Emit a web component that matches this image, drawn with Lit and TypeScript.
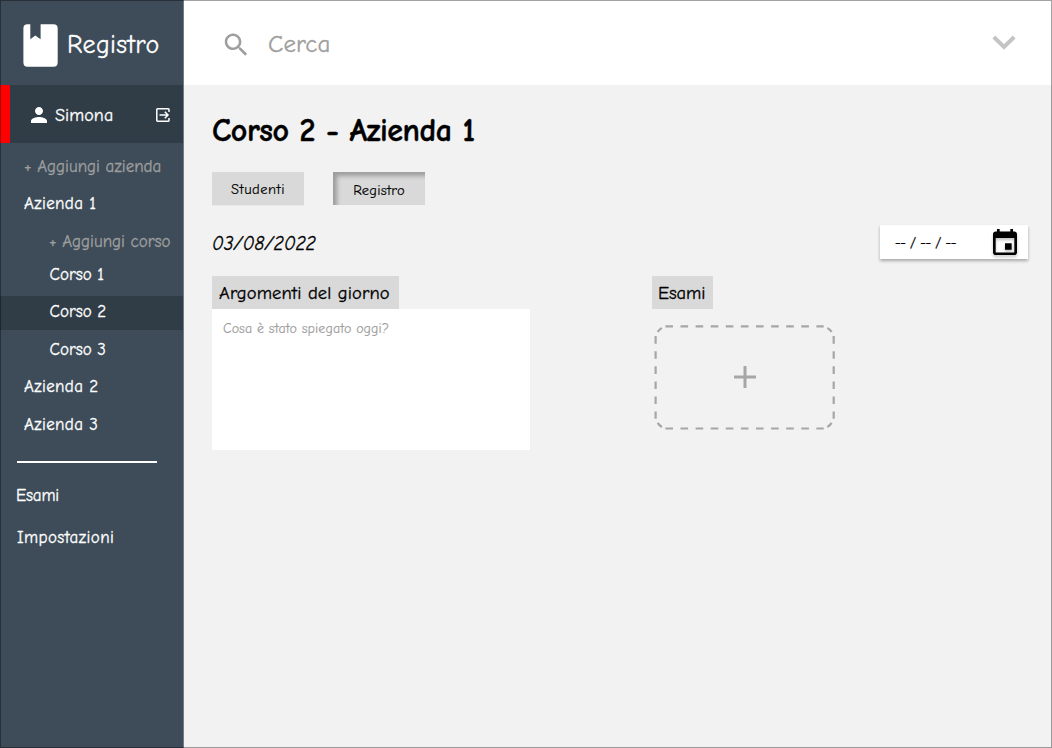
import { LitElement, html, css } from "lit";
import { customElement } from "lit/decorators.js";

const courses = ["Corso 1", "Corso 2", "Corso 3"];

@customElement("app-sidebar")
class AppSidebar extends LitElement {
  static styles = css`
    :host { display: flex; flex-direction: column; box-sizing: border-box; width: 184px; height: 100%;
      background: #3d4c58; border-right: 1px solid #707b85; color: #fff; font-size: 17px; white-space: nowrap; -webkit-text-stroke: 0.3px; }
    svg { display: block; flex: none; }
    .brand { display: flex; height: 85px; align-items: center; box-sizing: border-box; padding: 5px 0 0 23px; gap: 9px; font-size: 26px; letter-spacing: 0.35px; }
    .brand span { padding-bottom: 1px; }
    .user { display: flex; align-items: center; height: 58px; box-sizing: border-box; background: #303c46; border-left: 10px solid #f00; padding: 1px 13px 0 21px; font-size: 18px; letter-spacing: 0.1px; }
    .user span { margin-left: 8px; flex: 1; padding-top: 2px; }
    nav { display: flex; flex-direction: column; }
    .item { display: flex; align-items: center; height: 37px; padding-left: 24px; }
    .first { margin-top: 5px; }
    .sub { padding-left: 49.5px; height: 38px; }
    .sub.one { height: 30px; padding-bottom: 7px; }
    .add { color: #9e9e9e; height: 37px; }
    .sub.add { padding-left: 49px; padding-top: 1px; }
    .sub.one { height: 29px; }
    .company { letter-spacing: 0.35px; }
    .last { padding-top: 2px; height: 35px; }
    .active { background: #303c46; height: 31px; padding-bottom: 3px; }
    .rule { height: 2px; width: 140px; margin: 19px 0 0 17px; background: #fff; }
    .low { padding-left: 16px; height: 42px; }
    .low.esami { margin-top: 11px; letter-spacing: -0.2px; }
    .low.settings { padding-left: 17px; letter-spacing: 0.42px; height: 43px; }
  `;
  render() {
    return html`
      <div class="brand">
        <svg width="35" height="43" viewBox="0 0 35 43"><path fill="#fff" d="M4.500 .3H7.300V15.300L12.300 11.500L17.600 15.300V.3H30.500Q34.700 .3 34.700 4.500V38.500Q34.700 42.700 30.500 42.700H4.500Q.4 42.700 .4 38.500V4.500Q.4 .3 4.500 .3Z"/></svg>
        <span>Registro</span>
      </div>
      <div class="user">
        <svg width="16" height="16" viewBox="4 4 16 16" preserveAspectRatio="none"><path fill="#fff" d="M12 12c2.210 0 4-1.790 4-4s-1.790-4-4-4-4 1.790-4 4 1.790 4 4 4zm0 2c-2.670 0-8 1.340-8 4v2h16v-2c0-2.660-5.330-4-8-4z"/></svg>
        <span>Simona</span>
        <svg width="14" height="14" viewBox="0 0 14 14" fill="none" stroke="#fff" stroke-width="1.500"><path d="M13 4V1.500Q13 .8 12.300 .8H1.500Q.8 .8 .8 1.500V12.500Q.8 13.200 1.500 13.200H12.300Q13 13.200 13 12.500V10M3.500 7H12M8.800 3.800L12 7L8.800 10.200"/></svg>
      </div>
      <nav>
        <div class="item add first">+ Aggiungi azienda</div>
        <div class="item company">Azienda 1</div>
        <div class="item sub add">+ Aggiungi corso</div>
        ${courses.map((c, i) => html`<div class="item sub ${i === 0 ? "one" : i === 1 ? "active" : ""}">${c}</div>`)}
        <div class="item company">Azienda 2</div>
        <div class="item company last">Azienda 3</div>
        <div class="rule"></div>
        <div class="item low esami">Esami</div>
        <div class="item low settings">Impostazioni</div>
      </nav>`;
  }
}

@customElement("app-root")
class AppRoot extends LitElement {
  static styles = css`
    :host { display: flex; position: relative; width: 1052px; height: 748px; overflow: hidden; background: #f2f2f2;
      font-family: "Comic Sans MS", "Comic Neue", "Noto Sans", sans-serif; color: #000; white-space: nowrap; -webkit-text-stroke: 0.3px; }
    svg { display: block; flex: none; }
    .frame { position: absolute; inset: 0; border: 1px solid rgba(0, 0, 0, 0.36); pointer-events: none; }
    main { flex: 1; display: flex; flex-direction: column; min-width: 0; }
    header { display: flex; align-items: center; box-sizing: border-box; height: 85px; padding: 4px 36px 0 40px; background: #fff; color: #9e9e9e; font-size: 25px; }
    header span { flex: 1; margin-left: 20px; letter-spacing: 0.1px; padding-bottom: 2px; }
    .chev { margin-top: -5px; }
    .content { display: flex; flex-direction: column; padding: 25px 24px 0 28px; }
    h1 { margin: 0; font-size: 32px; line-height: 42px; font-weight: 700; letter-spacing: -0.45px; -webkit-text-stroke: 0.4px; }
    .tabs { display: flex; gap: 29px; margin-top: 20px; }
    .tab { width: 92px; height: 33px; box-sizing: border-box; display: flex; align-items: center; justify-content: center; background: #d9d9d9; font-size: 14.500px; letter-spacing: 0.5px; box-shadow: 0 1px 0 #e8e8e8; padding-top: 1px; -webkit-text-stroke: 0.15px; }
    .on { box-shadow: inset 4px 4px 4px rgba(0, 0, 0, 0.28); padding-top: 4px; letter-spacing: 0.2px; }
    .daterow { display: flex; justify-content: space-between; align-items: center; margin-top: 20px; height: 34px; font-size: 19px; }
    em { letter-spacing: 0.15px; padding-top: 3px; }
    .picker { display: flex; align-items: center; justify-content: space-between; box-sizing: border-box; width: 148px; height: 34px; background: #fff; padding: 0 11px 0 15px; font-size: 14px; letter-spacing: -0.3px; box-shadow: 0 2px 3px rgba(0, 0, 0, 0.3); }
    .picker svg { filter: drop-shadow(0 2px 1.500px rgba(0, 0, 0, 0.25)); }
    .cols { display: flex; margin-top: 17px; }
    .topics { width: 440px; }
    .label { display: inline-flex; align-items: center; box-sizing: border-box; height: 33px; background: #d9d9d9; font-size: 18.500px; padding-left: 7px; letter-spacing: 0.13px; }
    .wide { width: 187px; }
    .slim { width: 61px; padding-left: 6px; letter-spacing: -0.1px; }
    .area { width: 318px; height: 141px; box-sizing: border-box; background: #fff; color: #9e9e9e; font-size: 14px; line-height: 18px; padding: 11px; letter-spacing: 0.08px; -webkit-text-stroke: 0.15px; }
    .drop { margin: 15px 0 0 2px; }
    .exams, .topics { display: flex; flex-direction: column; align-items: flex-start; }
  `;
  render() {
    return html`
      <app-sidebar></app-sidebar>
      <main>
        <header>
          <svg width="24" height="23" viewBox="2.800 2.700 18 18"><path fill="#9e9e9e" d="M15.500 14h-.79l-.28-.27C15.410 12.590 16 11.110 16 9.500 16 5.910 13.090 3 9.500 3S3 5.910 3 9.500 5.910 16 9.500 16c1.610 0 3.090-.59 4.230-1.570l.27.28v.79l5 4.990L20.490 19l-4.990-5zm-6 0C7.010 14 5 11.990 5 9.500S7.010 5 9.500 5 14 7.010 14 9.500 11.990 14 9.500 14z"/></svg>
          <span>Cerca</span>
          <svg class="chev" width="24" height="15" viewBox="0 0 24 15"><path d="M1.800 2L12 12L22.200 2" fill="none" stroke="#c4c4c4" stroke-width="4"/></svg>
        </header>
        <div class="content">
          <h1>Corso 2 - Azienda 1</h1>
          <div class="tabs"><div class="tab">Studenti</div><div class="tab on">Registro</div></div>
          <div class="daterow">
            <em>03/08/2022</em>
            <div class="picker"><span>-- / -- / --</span>
              <svg width="24" height="26" viewBox="3 1 18 20" preserveAspectRatio="none"><path d="M17 12h-5v5h5v-5zM16 1v2H8V1H6v2H5c-1.110 0-1.990.9-1.990 2L3 19c0 1.100.89 2 2 2h14c1.100 0 2-.9 2-2V5c0-1.100-.9-2-2-2h-1V1h-2zm3 18H5V8h14v11z"/></svg>
            </div>
          </div>
          <div class="cols">
            <div class="topics"><div class="label wide">Argomenti del giorno</div><div class="area">Cosa è stato spiegato oggi?</div></div>
            <div class="exams"><div class="label slim">Esami</div>
              <svg class="drop" width="182" height="106" viewBox="0 0 182 106" fill="none" stroke="#a6a6a6">
                <g stroke-width="2.200" stroke-dasharray="7.600 7.500">
                  <path d="M11.400 2.300H169.700M11.400 104.500H169.700M1.600 12.100V94.700M179.700 12.100V94.700"/>
                </g>
                <path stroke-width="2.200" d="M3.700 7.900Q5.200 5.300 7.900 3.900M173.400 3.900Q176.100 5.300 177.600 7.900M3.700 98.900Q5.200 101.500 7.900 102.900M173.400 102.900Q176.100 101.500 177.600 98.900"/>
                <path d="M80 53H102M91 42V64" stroke-width="3"/>
              </svg>
            </div>
          </div>
        </div>
      </main>
      <div class="frame"></div>`;
  }
}
